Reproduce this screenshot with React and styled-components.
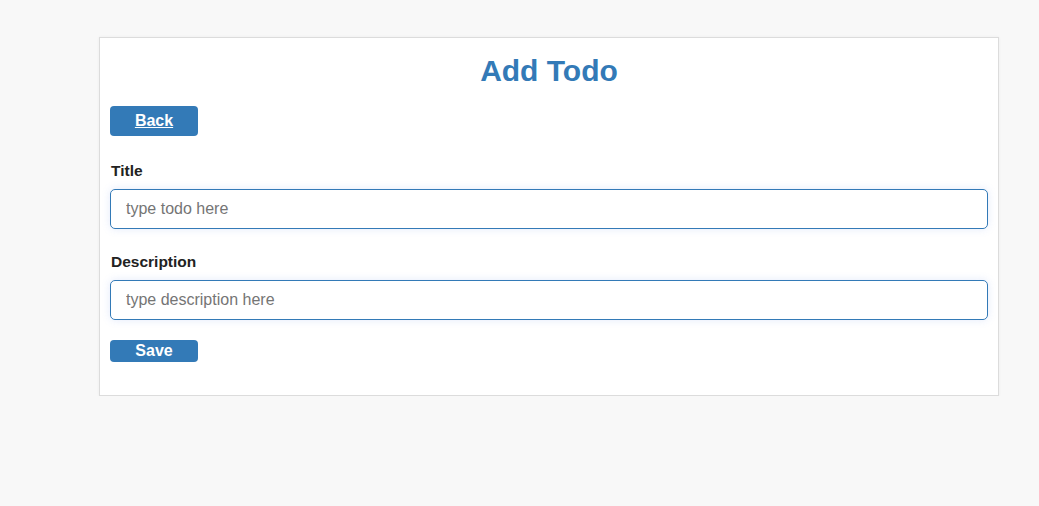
import styled, { createGlobalStyle } from "styled-components";

const GlobalStyle = createGlobalStyle`
  body {
    margin: 0;
    background-color: #f8f8f8;
    font-family: "Liberation Sans", Arial, sans-serif;
  }
`;

export default function App() {
  return (
    <>
      <GlobalStyle />
      <Page>
        <Card>
          <Heading>Add Todo</Heading>
          <Button as="a" href="#" $height={30} $underline>
            Back
          </Button>
          <Form onSubmit={(e) => e.preventDefault()}>
            <Field>
              <Label htmlFor="title">Title</Label>
              <Input id="title" placeholder="type todo here" />
            </Field>
            <Field>
              <Label htmlFor="description">Description</Label>
              <Input id="description" placeholder="type description here" />
            </Field>
            <Button type="submit" $height={22}>
              Save
            </Button>
          </Form>
        </Card>
      </Page>
    </>
  );
}

const Page = styled.main`
  padding: 37px 0 0 99px;
`;

const Card = styled.section`
  box-sizing: border-box;
  width: 900px;
  padding: 15px 10px 33px;
  background-color: #fff;
  border: 1px solid #dcdcdc;
  box-shadow: 0 0 3px rgba(0, 0, 0, 0.05);
`;

const Heading = styled.h1`
  margin: 0 0 17px;
  font-size: 30px;
  line-height: 36px;
  font-weight: 700;
  text-align: center;
  color: #337ab7;
`;

const Button = styled.button`
  box-sizing: border-box;
  display: flex;
  align-items: center;
  justify-content: center;
  width: 88px;
  height: ${(p) => p.$height}px;
  padding: 0;
  border: none;
  border-radius: 4px;
  background-color: #337ab7;
  color: #fff;
  font-family: inherit;
  font-size: 16px;
  font-weight: 700;
  text-decoration: ${(p) => (p.$underline ? "underline" : "none")};
  cursor: pointer;
`;

const Form = styled.form`
  display: flex;
  flex-direction: column;
  align-items: flex-start;
  padding-top: 26px;
`;

const Field = styled.div`
  display: flex;
  flex-direction: column;
  gap: 9px;
  width: 100%;
  margin-bottom: 24px;

  & + button {
    margin-top: -4px;
  }
`;

const Label = styled.label`
  font-size: 15.5px;
  line-height: 18px;
  font-weight: 700;
  color: #222;
  padding-left: 1px;
`;

const Input = styled.input`
  box-sizing: border-box;
  width: 100%;
  height: 40px;
  padding: 0 15px;
  border: 1px solid #337ab7;
  border-radius: 5px;
  box-shadow: 0 0 8px rgba(102, 140, 233, 0.18);
  font-family: inherit;
  font-size: 16px;
  color: #333;
  outline: none;

  &::placeholder {
    color: #757575;
  }
`;
